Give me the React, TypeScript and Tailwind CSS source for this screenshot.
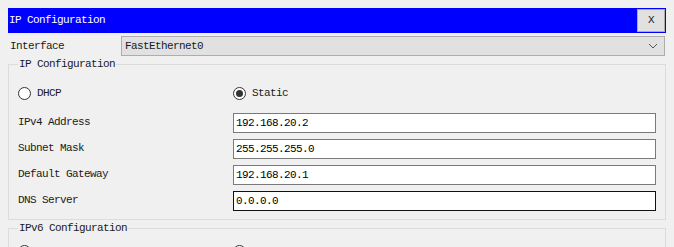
import React from "react";

const mono = "font-['Liberation_Mono','DejaVu_Sans_Mono',monospace] text-[11px] tracking-[-0.6px]";

const Radio = ({ checked, label }: { checked?: boolean; label?: string }) => (
  <div className="flex items-center gap-[6px]">
    <span className="w-[13px] h-[13px] rounded-full border border-[#333333] bg-white flex items-center justify-center shrink-0">
      {checked && <span className="w-[7px] h-[7px] rounded-full bg-[#333333]" />}
    </span>
    {label && <span className={`${mono} text-[#1a1a1a]`}>{label}</span>}
  </div>
);

const Field = ({ label, value, focused }: { label: string; value: string; focused?: boolean }) => (
  <div className="flex items-center h-[20px]">
    <span className={`${mono} w-[215px] text-[#1a1a1a] -mt-[2px]`}>{label}</span>
    <div
      className={`w-[423px] h-[20px] bg-white border flex items-center pl-[2px] ${
        focused ? "border-[#111111]" : "border-[#7a7a7a]"
      }`}
    >
      <span className={`${mono} text-black`}>{value}</span>
    </div>
  </div>
);

export default function App() {
  const fields = [
    { label: "IPv4 Address", value: "192.168.20.2" },
    { label: "Subnet Mask", value: "255.255.255.0" },
    { label: "Default Gateway", value: "192.168.20.1" },
    { label: "DNS Server", value: "0.0.0.0", focused: true },
  ];

  return (
    <div className="w-[674px] h-[247px] overflow-hidden bg-[#f0f0f0] pt-2 pl-2">
      {/* title bar */}
      <div className="w-[658px] h-[25px] bg-[#0000ff] flex items-center justify-between pl-px pr-px">
        <span className={`${mono} text-white`}>IP Configuration</span>
        <button className="w-[28px] h-[23px] bg-[#e1e1e1] border border-[#adadad] flex items-center justify-center">
          <span className={`${mono} text-[10px] text-[#222222]`}>X</span>
        </button>
      </div>

      {/* interface */}
      <div className="flex items-center h-[20px] mt-[3px]">
        <span className={`${mono} w-[113px] pl-[2px] text-[#1a1a1a]`}>Interface</span>
        <div className="w-[544px] h-[20px] bg-[#e1e1e1] border border-[#adadad] flex items-center justify-between pl-[3px] pr-[6px]">
          <span className={`${mono} text-[#1a1a1a]`}>FastEthernet0</span>
          <svg width="10" height="6" viewBox="0 0 10 6" fill="none">
            <path d="M1 1l4 4 4-4" stroke="#555555" strokeWidth="1" />
          </svg>
        </div>
      </div>

      {/* IPv4 group */}
      <fieldset className="w-[658px] mt-[1px] border border-[#dcdcdc] pl-[9px] pb-[8px]">
        <legend className={`${mono} leading-[14px] px-px text-[#1a1a1a]`}>IP Configuration</legend>
        <div className="flex items-center h-[20px] mt-[12px]">
          <div className="w-[215px]">
            <Radio label="DHCP" />
          </div>
          <Radio checked label="Static" />
        </div>
        <div className="flex flex-col gap-[6px] mt-[10px]">
          {fields.map((f) => (
            <Field key={f.label} {...f} />
          ))}
        </div>
      </fieldset>

      {/* IPv6 group, cut off by the window */}
      <fieldset className="w-[658px] mt-[1px] border border-[#dcdcdc] pl-[9px] pb-[8px]">
        <legend className={`${mono} leading-[14px] px-px text-[#1a1a1a]`}>IPv6 Configuration</legend>
        <div className="flex items-center h-[20px] mt-[6px]">
          <div className="w-[215px]">
            <Radio />
          </div>
          <Radio />
        </div>
      </fieldset>
    </div>
  );
}
